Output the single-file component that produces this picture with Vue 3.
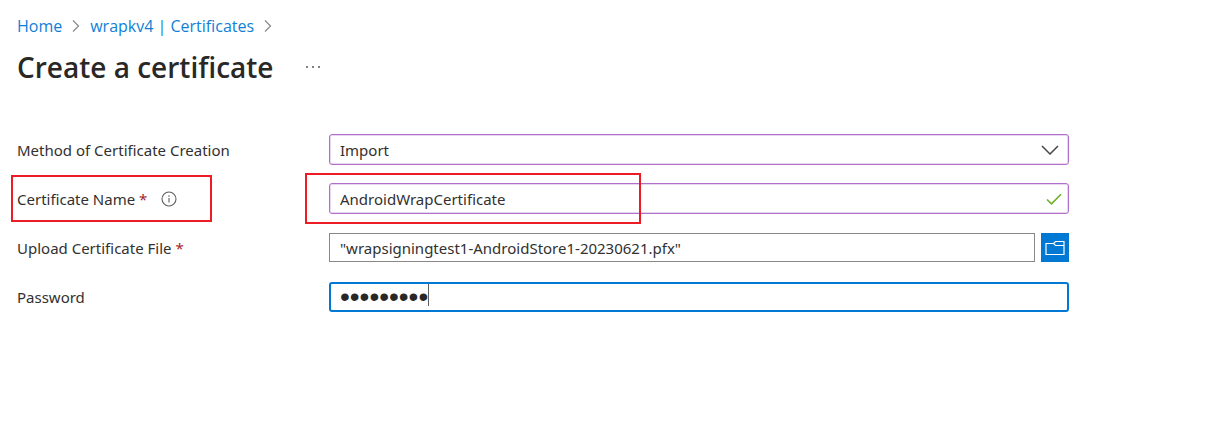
<script setup>
import { ref } from 'vue'

const method = ref('Import')
const name = ref('AndroidWrapCertificate')
const file = ref('"wrapsigningtest1-AndroidStore1-20230621.pfx"')
const password = ref('certpass1')
</script>

<template>
  <main class="page">
    <nav class="crumbs" aria-label="Breadcrumb">
      <a href="#">Home</a>
      <svg class="sep" viewBox="0 0 8 14" aria-hidden="true"><path d="M1 1.5 6.5 7 1 12.5" /></svg>
      <a href="#">wrapkv4 | Certificates</a>
      <svg class="sep" viewBox="0 0 8 14" aria-hidden="true"><path d="M1 1.5 6.5 7 1 12.5" /></svg>
    </nav>

    <header class="heading">
      <h1>Create a certificate</h1>
      <button class="more" type="button" aria-label="More actions">
        <svg viewBox="0 0 16 4" aria-hidden="true">
          <circle cx="2" cy="2" r="0.9" /><circle cx="8" cy="2" r="0.9" /><circle cx="14" cy="2" r="0.9" />
        </svg>
      </button>
    </header>

    <form class="form" @submit.prevent>
      <div class="row">
        <div class="label"><label for="method">Method of Certificate Creation</label></div>
        <div class="field">
          <select id="method" v-model="method" class="control edited">
            <option>Import</option>
            <option>Generate</option>
          </select>
          <svg class="chevron" viewBox="0 0 18 10" aria-hidden="true"><path d="M1 1 9 9 17 1" /></svg>
        </div>
      </div>

      <div class="row">
        <div class="label">
          <label for="name">Certificate Name <span class="req">*</span></label>
          <svg class="info" viewBox="0 0 16 16" aria-hidden="true">
            <circle cx="8" cy="8" r="7" />
            <path d="M8 7v4.5M8 4.3v1.4" />
          </svg>
          <span class="mark mark-label"></span>
        </div>
        <div class="field">
          <input id="name" v-model="name" class="control edited" type="text" />
          <svg class="check" viewBox="0 0 16 12" aria-hidden="true"><path d="M1 6.5 5.5 10.8 15 1.2" /></svg>
          <span class="mark mark-field"></span>
        </div>
      </div>

      <div class="row">
        <div class="label"><label for="file">Upload Certificate File <span class="req">*</span></label></div>
        <div class="field upload">
          <input id="file" v-model="file" class="control file" type="text" />
          <button class="browse" type="button" aria-label="Browse for a file">
            <svg viewBox="0 0 20 16" aria-hidden="true">
              <path d="M8.5 3.5H1V14.5H19V1.5H10.5L8.5 3.5 10.5 5.5H19" />
            </svg>
          </button>
        </div>
      </div>

      <div class="row">
        <div class="label"><label for="password">Password</label></div>
        <div class="field">
          <input id="password" v-model="password" class="control active" type="password" />
          <span class="caret"></span>
        </div>
      </div>
    </form>
  </main>
</template>

<style>
body {
  background: #fff;
}
</style>

<style scoped>
.page {
  padding: 15px 153px 24px 17px;
  font-family: "Open Sans", "Noto Sans", sans-serif;
  font-size: 16px;
  line-height: 22px;
  color: #323130;
}
.crumbs {
  display: flex;
  align-items: center;
  gap: 10px;
}
.crumbs a {
  color: #0f7fd8;
  text-decoration: none;
}
.sep {
  width: 8px;
  height: 14px;
  fill: none;
  stroke: #8a8886;
  stroke-width: 1.2;
}
.heading {
  display: flex;
  align-items: center;
  gap: 31px;
  margin-top: 10px;
}
h1 {
  margin: 0;
  font-size: 28px;
  line-height: 40px;
  font-weight: 600;
  color: #292827;
}
.more {
  padding: 0;
  border: 0;
  background: none;
}
.more svg {
  display: block;
  width: 16px;
  height: 4px;
  fill: #484644;
}
.form {
  display: grid;
  gap: 18px;
  margin-top: 47px;
  font-family: "Noto Sans", "Open Sans", sans-serif;
  font-size: 15px;
}
.row {
  display: grid;
  grid-template-columns: 312px 1fr;
  align-items: center;
}
.label {
  position: relative;
  display: flex;
  align-items: center;
  gap: 14px;
  height: 31px;
}
.req {
  color: #a4262c;
}
.info {
  width: 16px;
  height: 16px;
  fill: none;
  stroke: #605e5c;
  stroke-width: 1.1;
}
.field {
  position: relative;
  display: flex;
  align-items: center;
  min-width: 0;
}
.control {
  box-sizing: border-box;
  flex: 1;
  min-width: 0;
  height: 31px;
  margin: 0;
  padding: 0 10px;
  border: 1px solid #8a8886;
  border-radius: 3px;
  outline: 0;
  background: #fff;
  color: #323130;
  font: inherit;
  appearance: none;
}
.edited {
  border-color: #b070ca;
  box-shadow: inset 0 0 0 1px #e9d6f0;
}
.file {
  height: 29px;
  border-radius: 0;
}
.active {
  height: 30px;
  padding: 0 9px;
  border: 2px solid #0078d4;
  color: #292827;
  font-family: "Liberation Sans", Arial, sans-serif;
  font-size: 28px;
}
.chevron,
.check {
  position: absolute;
  pointer-events: none;
  fill: none;
}
.chevron {
  right: 10px;
  width: 18px;
  height: 10px;
  stroke: #484644;
  stroke-width: 1.5;
}
.check {
  right: 7px;
  width: 16px;
  height: 12px;
  stroke: #6bb128;
  stroke-width: 1.6;
}
.upload {
  gap: 6px;
}
.browse {
  display: grid;
  place-items: center;
  width: 28px;
  height: 29px;
  padding: 0;
  border: 0;
  background: #0078d4;
}
.browse svg {
  width: 20px;
  height: 16px;
  fill: none;
  stroke: #fff;
  stroke-width: 1.2;
}
.mark {
  position: absolute;
  box-sizing: border-box;
  border: 2px solid #ed1c24;
  pointer-events: none;
}
.mark-label {
  top: -8px;
  left: -6px;
  width: 201px;
  height: 47px;
}
.mark-field {
  top: -10px;
  left: -24px;
  width: 336px;
  height: 51px;
}
.caret {
  position: absolute;
  top: 2px;
  left: 99px;
  width: 1px;
  height: 22px;
  background: #605e5c;
}
</style>
